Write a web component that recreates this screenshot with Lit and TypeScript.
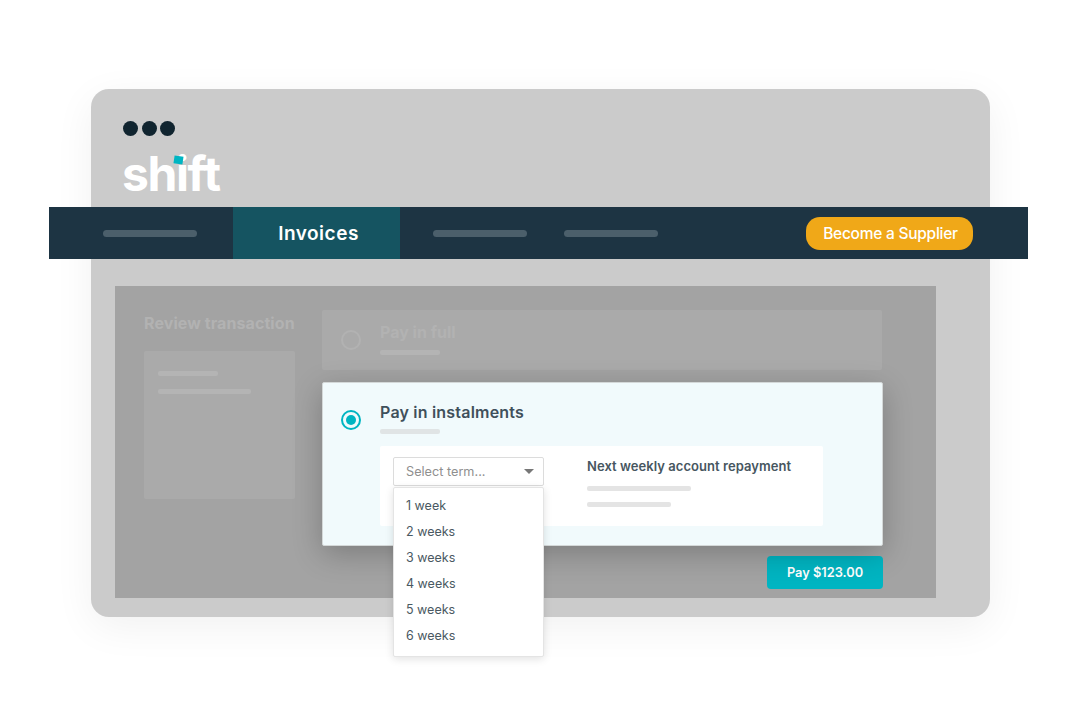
import { LitElement, html, css } from 'lit';
import { customElement } from 'lit/decorators.js';

const terms = ['1 week', '2 weeks', '3 weeks', '4 weeks', '5 weeks', '6 weeks'];

@customElement('app-root')
export class AppRoot extends LitElement {
  static styles = css`
    :host {
      display: block;
      width: 1080px;
      height: 720px;
      overflow: hidden;
      background: #fff;
      font-family: 'Inter', 'Roboto', sans-serif;
    }
    .stage {
      padding: 89px 90px 0 91px;
    }
    .window {
      height: 528px;
      box-sizing: border-box;
      padding-top: 32px;
      background: #cbcbcb;
      border-radius: 18px;
      box-shadow: 0 10px 40px rgba(0, 0, 0, 0.06);
    }
    .dots {
      display: flex;
      gap: 3.5px;
      padding-left: 32px;
    }
    .dots span {
      width: 15px;
      height: 15px;
      border-radius: 50%;
      background: #10242f;
    }
    .logo {
      position: relative;
      width: max-content;
      height: 42px;
      margin: 17px 0 0 31px;
      font-size: 48px;
      line-height: 42px;
      font-weight: 700;
      letter-spacing: -1.4px;
      color: #fff;
    }
    .logo i {
      position: absolute;
      left: 52px;
      top: 3px;
      width: 9px;
      height: 8px;
      background: #00b5c2;
      transform: rotate(8deg);
    }
    nav {
      display: flex;
      align-items: center;
      height: 52px;
      margin: 12px -38px 0 -42px;
      background: #1d3443;
    }
    .bar {
      height: 7px;
      border-radius: 4px;
      background: #4b5f6b;
      width: 94px;
    }
    .active {
      display: flex;
      align-items: center;
      justify-content: center;
      box-sizing: border-box;
      width: 167px;
      height: 100%;
      margin: 0 33px 0 36px;
      padding-left: 4px;
      background: #155461;
      color: #fff;
      font-size: 19px;
      font-weight: 600;
      letter-spacing: 0.5px;
    }
    nav .bar + .bar {
      margin-left: 37px;
    }
    .supplier {
      display: flex;
      align-items: center;
      justify-content: center;
      box-sizing: border-box;
      width: 167px;
      height: 33px;
      margin-left: auto;
      margin-right: 55px;
      padding-left: 2px;
      border-radius: 14px;
      background: #f0a818;
      color: #fff;
      font-size: 15.5px;
      font-weight: 500;
      letter-spacing: -0.25px;
    }
    .panel {
      position: relative;
      display: grid;
      grid-template-columns: 151px 561px;
      column-gap: 27px;
      height: 312px;
      box-sizing: border-box;
      margin: 27px 54px 0 24px;
      padding: 24px 0 0 29px;
      background: #a3a3a3;
    }
    .review-title {
      font-size: 16px;
      line-height: 26px;
      font-weight: 700;
      letter-spacing: 0.08px;
      color: #b2b2b2;
      white-space: nowrap;
    }
    .review-box {
      display: flex;
      flex-direction: column;
      gap: 13px;
      box-sizing: border-box;
      height: 148px;
      margin-top: 15px;
      padding: 20px 14px;
      border-radius: 2px;
      background: #aaaaaa;
    }
    .review-box .line {
      height: 5px;
      border-radius: 2px;
      background: #b4b4b4;
    }
    .column {
      display: flex;
      flex-direction: column;
      align-items: flex-end;
    }
    .option {
      display: flex;
      box-sizing: border-box;
      width: 560px;
      align-self: flex-start;
    }
    .radio {
      flex: none;
      box-sizing: border-box;
      width: 20px;
      height: 20px;
      margin: 0 19px 0 19px;
      border-radius: 50%;
    }
    .full {
      height: 60px;
      padding-top: 20px;
      background: #aaaaaa;
      border-radius: 2px;
    }
    .full .radio {
      border: 2px solid #b2b2b2;
    }
    .full .name {
      margin-top: -11px;
      font-size: 16px;
      line-height: 26px;
      font-weight: 700;
      color: #b2b2b2;
    }
    .full .line {
      width: 60px;
      height: 5px;
      margin-top: 5px;
      border-radius: 2px;
      background: #b4b4b4;
    }
    .instalments {
      position: relative;
      width: 561px;
      height: 164px;
      margin-top: 12px;
      padding-top: 27px;
      background: #f1fafc;
      border: 1px solid #d4d8d8;
      border-radius: 2px;
      box-shadow: 0 8px 30px rgba(0, 0, 0, 0.24);
    }
    .instalments .radio {
      margin: 0 19px 0 18px;
      border: 2px solid #00b5c2;
      display: flex;
      align-items: center;
      justify-content: center;
    }
    .instalments .radio::after {
      content: '';
      width: 10px;
      height: 10px;
      border-radius: 50%;
      background: #00b5c2;
    }
    .body {
      flex: 1;
      margin-top: -9px;
    }
    .instalments .name {
      font-size: 16px;
      line-height: 22px;
      font-weight: 600;
      letter-spacing: 0.2px;
      color: #3f505b;
    }
    .instalments .line {
      width: 60px;
      height: 5px;
      margin-top: 6px;
      border-radius: 2px;
      background: #e0e4e5;
    }
    .inner {
      display: flex;
      box-sizing: border-box;
      width: 443px;
      height: 80px;
      margin-top: 12px;
      padding: 11px 0 0 13px;
      background: #fff;
      border-radius: 2px;
    }
    .select {
      display: flex;
      align-items: center;
      justify-content: space-between;
      box-sizing: border-box;
      width: 151px;
      height: 29px;
      padding: 0 9px 0 12px;
      border: 1px solid #dcdcdc;
      border-radius: 2px;
      font-size: 12.7px;
      color: #8f8f8f;
    }
    .caret {
      width: 0;
      height: 0;
      border-left: 5px solid transparent;
      border-right: 5px solid transparent;
      border-top: 5px solid #777;
    }
    .next {
      margin-left: 43px;
    }
    .next h4 {
      margin: 0;
      font-size: 13px;
      line-height: 18px;
      font-weight: 600;
      letter-spacing: 0.05px;
      color: #47565f;
      white-space: nowrap;
    }
    .next .bars {
      display: flex;
      flex-direction: column;
      gap: 11px;
      margin-top: 11px;
    }
    .next .bars span {
      height: 5px;
      border-radius: 2px;
      background: #e4e4e4;
    }
    .menu {
      position: absolute;
      left: 70px;
      top: 104px;
      box-sizing: border-box;
      width: 151px;
      height: 170px;
      padding: 5px 0 0 12px;
      background: #fff;
      border: 1px solid #e4e4e4;
      border-radius: 2px;
      box-shadow: 0 2px 8px rgba(0, 0, 0, 0.12);
      z-index: 2;
    }
    .menu div {
      height: 26px;
      line-height: 26px;
      font-size: 12.5px;
      color: #4a5962;
    }
    .pay {
      display: flex;
      align-items: center;
      justify-content: center;
      width: 116px;
      height: 33px;
      margin-top: 10px;
      border-radius: 4px;
      background: #00b5c2;
      color: #fff;
      font-size: 12.8px;
      font-weight: 600;
    }
  `;

  render() {
    return html`
      <div class="stage">
        <div class="window">
          <div class="dots"><span></span><span></span><span></span></div>
          <div class="logo">shift<i></i></div>
          <nav>
            <span class="bar" style="margin-left:54px"></span>
            <div class="active">Invoices</div>
            <span class="bar"></span>
            <span class="bar"></span>
            <div class="supplier">Become a Supplier</div>
          </nav>
          <div class="panel">
            <div>
              <div class="review-title">Review transaction</div>
              <div class="review-box">
                <div class="line" style="width:60px"></div>
                <div class="line" style="width:93px"></div>
              </div>
            </div>
            <div class="column">
              <div class="option full">
                <span class="radio"></span>
                <div>
                  <div class="name">Pay in full</div>
                  <div class="line"></div>
                </div>
              </div>
              <div class="option instalments">
                <span class="radio"></span>
                <div class="body">
                  <div class="name">Pay in instalments</div>
                  <div class="line"></div>
                  <div class="inner">
                    <div class="select">Select term...<span class="caret"></span></div>
                    <div class="next">
                      <h4>Next weekly account repayment</h4>
                      <div class="bars">
                        <span style="width:104px"></span>
                        <span style="width:84px"></span>
                      </div>
                    </div>
                  </div>
                </div>
                <div class="menu">
                  ${terms.map((t) => html`<div>${t}</div>`)}
                </div>
              </div>
              <div class="pay">Pay $123.00</div>
            </div>
          </div>
        </div>
      </div>
    `;
  }
}
